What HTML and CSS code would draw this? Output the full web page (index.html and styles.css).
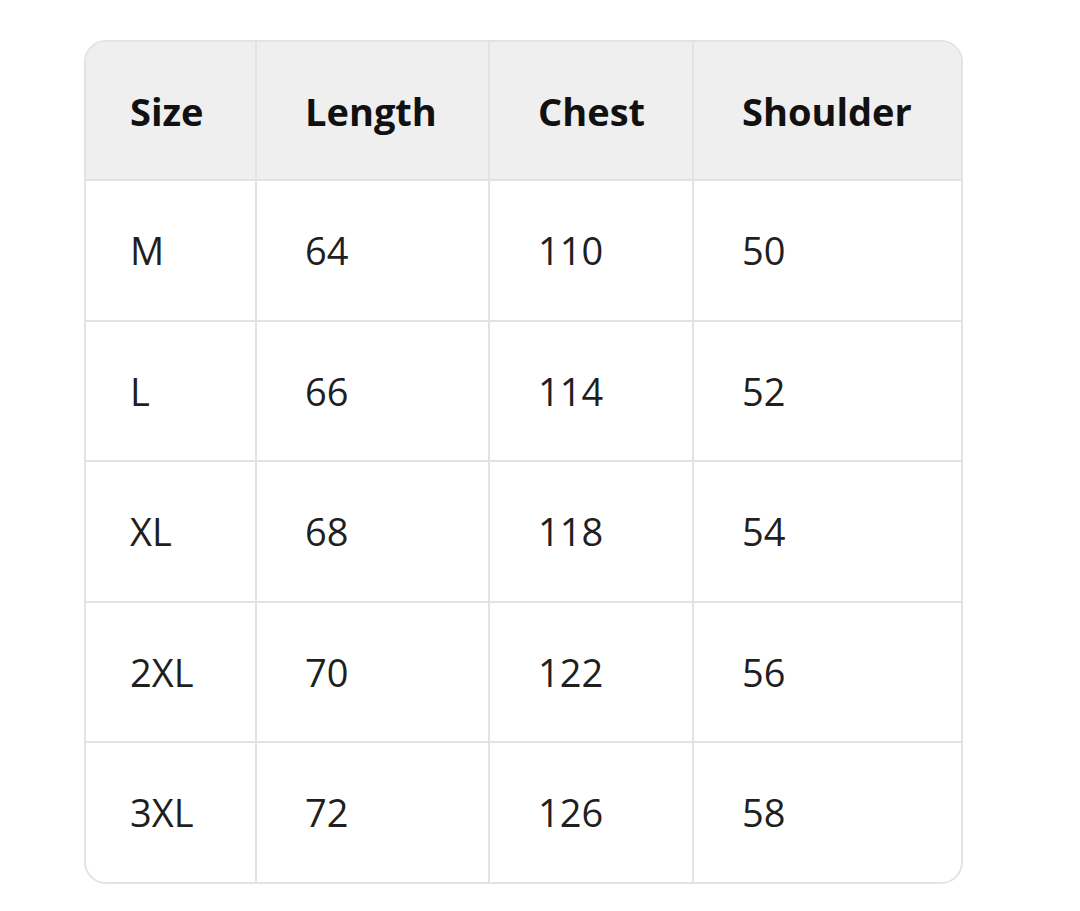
FILE: index.html
```html
<!DOCTYPE html>
<html>
<head>
<meta charset="utf-8">
<link rel="stylesheet" href="styles.css">
</head>
<body>
<div class="wrap">
<table class="size-table">
  <colgroup>
    <col class="c1"><col class="c2"><col class="c3"><col class="c4">
  </colgroup>
  <thead>
    <tr><th>Size</th><th>Length</th><th>Chest</th><th>Shoulder</th></tr>
  </thead>
  <tbody>
    <tr><td>M</td><td>64</td><td>110</td><td>50</td></tr>
    <tr><td>L</td><td>66</td><td>114</td><td>52</td></tr>
    <tr><td>XL</td><td>68</td><td>118</td><td>54</td></tr>
    <tr><td>2XL</td><td>70</td><td>122</td><td>56</td></tr>
    <tr><td>3XL</td><td>72</td><td>126</td><td>58</td></tr>
  </tbody>
</table>
</div>
</body>
</html>
```

FILE: styles.css
```css
html, body {
  margin: 0;
  padding: 0;
  background: #ffffff;
}
.wrap {
  padding: 40px 0 0 84px;
}
.size-table {
  border-collapse: separate;
  border-spacing: 0;
  table-layout: fixed;
  width: 879px;
  box-sizing: border-box;
  border: 2px solid #e3e3e3;
  border-radius: 22px;
  overflow: hidden;
  font-family: "Open Sans", "Noto Sans", sans-serif;
  color: #1f1f1f;
}
.c1 { width: 171px; }
.c2 { width: 233px; }
.c3 { width: 204px; }
.c4 { width: 267px; }
.size-table th,
.size-table td {
  text-align: left;
  padding: 0 0 0 48px;
  font-size: 38px;
  border-right: 2px solid #e3e3e3;
  border-bottom: 2px solid #e3e3e3;
  vertical-align: middle;
}
.size-table th:first-child,
.size-table td:first-child {
  padding-left: 44px;
}
.size-table th {
  height: 137px;
  background: #efefef;
  font-weight: 700;
  color: #111;
}
.size-table td {
  height: 138.5px;
  font-weight: 400;
}
.size-table th:last-child,
.size-table td:last-child {
  border-right: none;
}
.size-table tbody tr:last-child td {
  border-bottom: none;
}
```
